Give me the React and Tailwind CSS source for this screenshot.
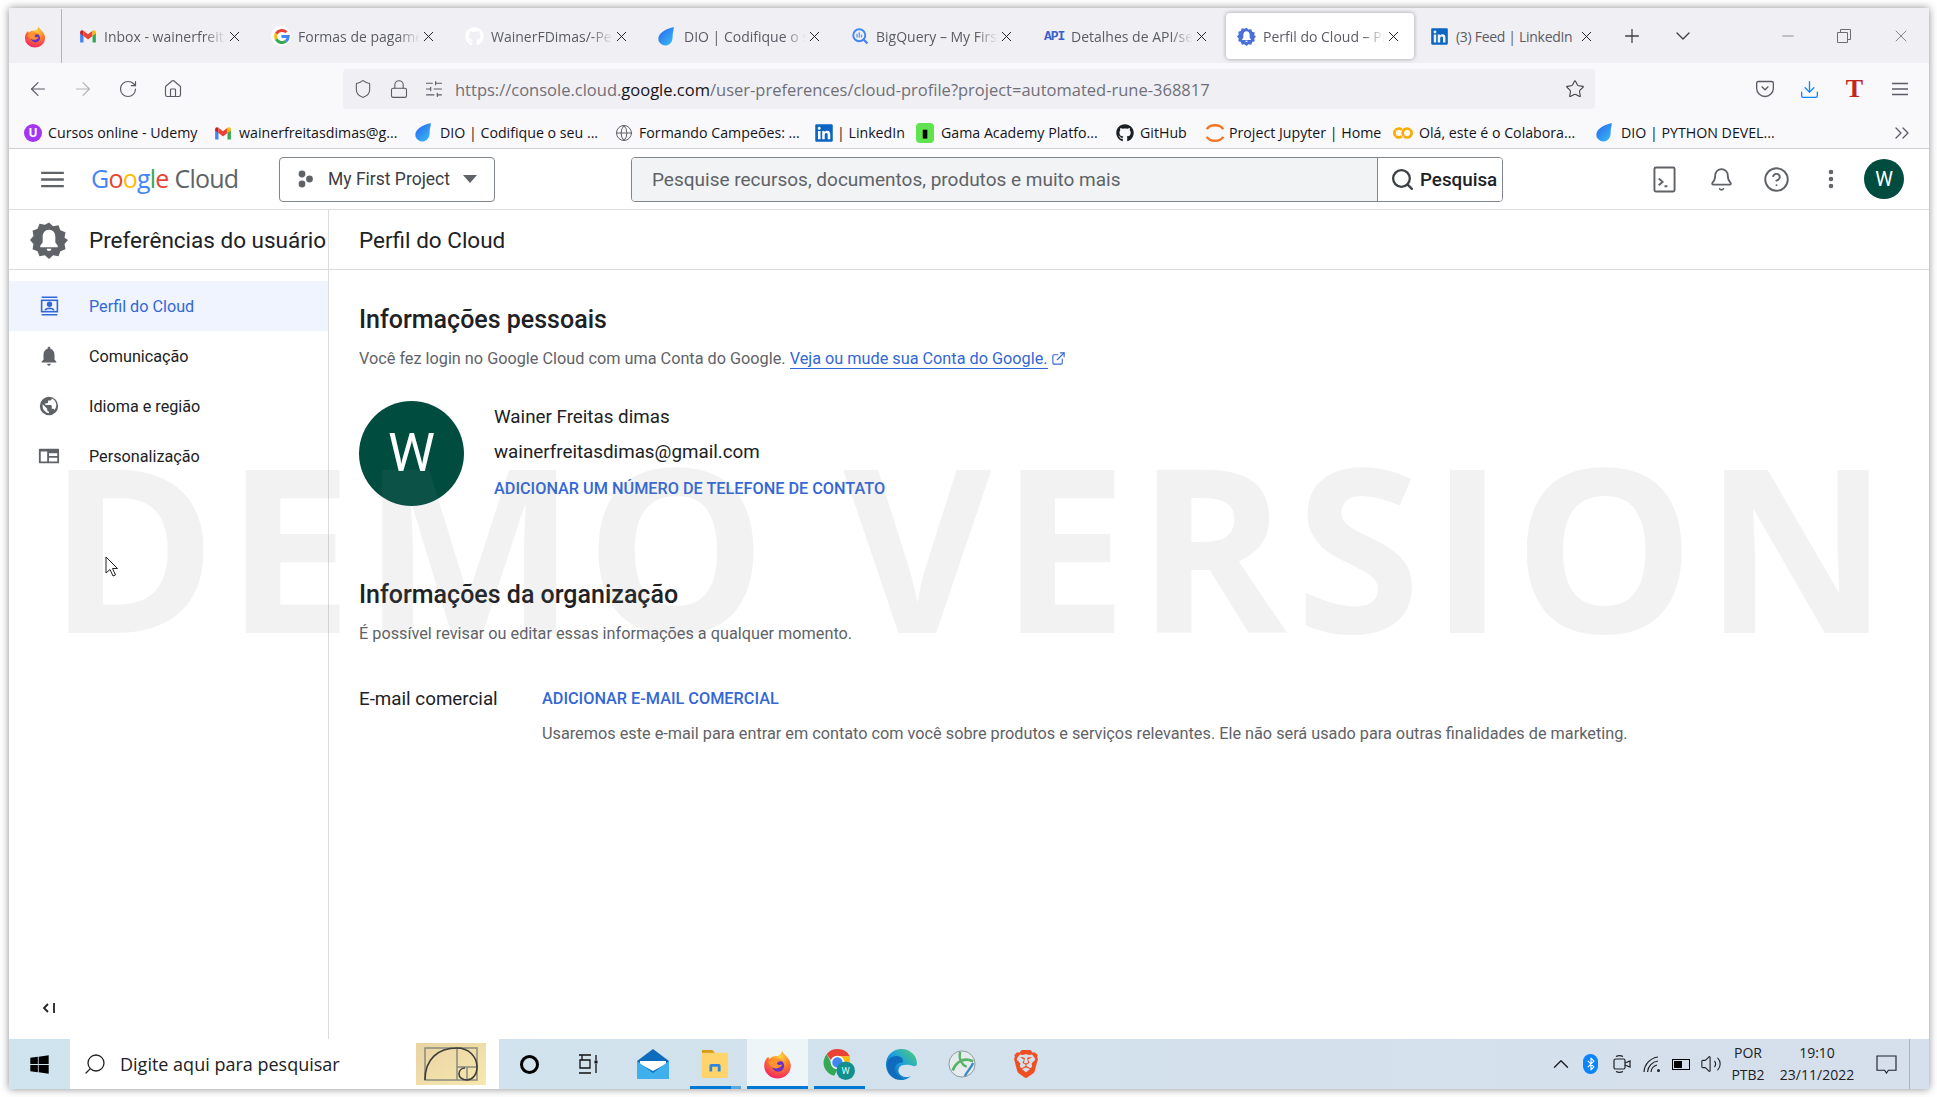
import { ArrowLeft, ArrowRight, RotateCw, Home, Shield, Lock, SlidersHorizontal, Star, Download, Plus, ChevronDown, ChevronsRight, Minus, X, Search, Bell, CircleHelp, EllipsisVertical, ExternalLink, ChevronUp, Volume2, Bluetooth, Globe } from 'lucide-react'
import { FaGithub, FaLinkedin, FaWindows } from 'react-icons/fa'
import { SiBrave, SiGooglecolab } from 'react-icons/si'

const Firefox = ({ className }) => (
  <svg viewBox="0 0 24 24" className={className}>
    <defs>
      <radialGradient id="ffx" cx="0.6" cy="0.2" r="0.95">
        <stop offset="0" stopColor="#ffd43a" />
        <stop offset="0.45" stopColor="#ff7a2a" />
        <stop offset="0.8" stopColor="#f5315c" />
        <stop offset="1" stopColor="#d6187e" />
      </radialGradient>
    </defs>
    <path d="M16 1c.5 2.500 3 3.500 4.500 6 1.500 2 2.500 4 2.500 6.500A11 10.500 0 0 1 1 13.500C1 10 2.500 7.500 4.500 6c0 1 .5 1.500 1 2C7 5.500 10 5 12 5.500c2-1 3.500-2.500 4-4.500z" fill="url(#ffx)" />
    <circle cx="12.500" cy="13.500" r="5" fill="#6a30c8" />
    <path d="M4.500 11c2-3.500 7-4.500 10-2.500 1.200.8 1.500 1.500 1.500 1.500-2.500-1-4 .5-4.500 1.500.5 1.500 3 1.500 4.500 1-1 3-6 4.500-9 1.500-1.500-1-2.500-2-2.500-3z" fill="#ff9330" />
  </svg>
)

const Gmail = ({ className }) => (
  <svg viewBox="0 0 24 24" className={className}>
    <path d="M1.500 7v13.500H6V11z" fill="#4285f4" />
    <path d="M22.500 7v13.500H18V11z" fill="#34a853" />
    <path d="M1.500 7.500C1.500 4.500 4 3.500 6 5v7L1.500 8.500z" fill="#c5221f" />
    <path d="M6 5l6 4.500L18 5v7l-6 4.500L6 12z" fill="#ea4335" />
    <path d="M18 5c2-1.500 4.500-.5 4.500 2.500v1L18 12z" fill="#fbbc04" />
  </svg>
)

const GoogleG = ({ className }) => (
  <span className={`${className} rounded-full bg-white flex items-center justify-center`}>
    <svg viewBox="0 0 24 24" className="w-[17px] h-[17px]" fill="none" strokeWidth="4.200">
      <path d="M19 6a9.500 9.500 0 0 0-14.500 2" stroke="#ea4335" />
      <path d="M4.500 8a9.500 9.500 0 0 0 0 8" stroke="#fbbc04" />
      <path d="M4.500 16a9.500 9.500 0 0 0 14 2.500" stroke="#34a853" />
      <path d="M18.500 18.500a9.500 9.500 0 0 0 3-6.500H12" stroke="#4285f4" />
    </svg>
  </span>
)

const Dio = ({ className }) => (
  <svg viewBox="0 0 24 24" className={className}>
    <defs>
      <linearGradient id="dio" x1="0.2" y1="0.1" x2="0.9" y2="0.9">
        <stop offset="0" stopColor="#2a6ff0" />
        <stop offset="1" stopColor="#38b6f2" />
      </linearGradient>
    </defs>
    <path d="M20 1c1 3-1 5-1 11a8.500 10 0 0 1-16 5C1 9 9 4 20 1z" fill="url(#dio)" />
  </svg>
)

const BigQuery = ({ className }) => (
  <svg viewBox="0 0 24 24" className={className} fill="none">
    <circle cx="11" cy="11" r="8" stroke="#4285f4" strokeWidth="2.500" />
    <path d="M8 9v5M11 7v7M14 10v4" stroke="#669df6" strokeWidth="1.800" />
    <path d="M16 16l6 6" stroke="#4285f4" strokeWidth="3" />
  </svg>
)

const GearBell = ({ className, fill = '#5f6368', bell = '#fff' }) => (
  <svg viewBox="0 0 24 24" className={className}>
    <path fill={fill} d="M12 1l2.600 2.300 3.400-.6 1.200 3.200 3.200 1.200-.6 3.400L24 12l-2.200 2.500.6 3.400-3.200 1.200-1.200 3.200-3.400-.6L12 24l-2.600-2.300-3.400.6-1.200-3.200-3.200-1.200.6-3.400L0 12l2.200-2.500-.6-3.400 3.200-1.200L6 1.700l3.400.6z" />
    <path fill={bell} d="M12 5.500c-2.500 0-4 2-4 4.500v3.500L6.500 15.500v1h11v-1L16 13.500V10c0-2.500-1.500-4.500-4-4.500zM10.500 17.500h3a1.500 1.500 0 0 1-3 0z" />
  </svg>
)

const ApiIcon = () => (
  <span className="w-[20px] shrink-0 text-[13px] font-bold text-[#3b62c9] leading-none font-['Liberation_Mono',monospace] tracking-[-1px]">API</span>
)

const tabs = [
  { title: 'Inbox - wainerfreitasdimas', icon: <Gmail className="w-[18px] h-[18px] shrink-0" /> },
  { title: 'Formas de pagamento', icon: <GoogleG className="w-[20px] h-[20px] shrink-0 -ml-[1px]" /> },
  { title: 'WainerFDimas/-Personal', icon: <FaGithub className="w-[19px] h-[19px] shrink-0 text-white" /> },
  { title: 'DIO | Codifique o seu', icon: <Dio className="w-[21px] h-[21px] shrink-0 -ml-[2px]" /> },
  { title: 'BigQuery – My First Project', icon: <BigQuery className="w-[18px] h-[18px] shrink-0" /> },
  { title: 'Detalhes de API/serviço', icon: <ApiIcon /> },
  { title: 'Perfil do Cloud – Preferências', icon: <GearBell fill="#4a6fd8" bell="#fff" className="w-[19px] h-[19px] shrink-0" />, active: true },
  { title: '(3) Feed | LinkedIn', icon: <FaLinkedin className="w-[19px] h-[19px] shrink-0 text-[#0a66c2]" />, last: true },
]

const bookmarks = [
  { label: 'Cursos online - Udemy', w: 'w-[190px]', icon: <span className="w-[18px] h-[18px] shrink-0 rounded-full bg-[#a435f0] text-white text-[12px] font-bold flex items-center justify-center leading-none">U</span> },
  { label: 'wainerfreitasdimas@g...', w: 'w-[199px]', gap: 'gap-[7px]', icon: <Gmail className="w-[18px] h-[18px] shrink-0" /> },
  { label: 'DIO | Codifique o seu ...', w: 'w-[202px]', icon: <Dio className="w-[21px] h-[21px] shrink-0" /> },
  { label: 'Formando Campeões: ...', w: 'w-[199px]', icon: <Globe className="w-[18px] h-[18px] shrink-0 text-[#5b5b66]" strokeWidth={1.300} /> },
  { label: '| LinkedIn', w: 'w-[102px]', gap: 'gap-[3px]', icon: <FaLinkedin className="w-[20px] h-[20px] shrink-0 text-[#0a66c2]" /> },
  { label: 'Gama Academy Platfo...', w: 'w-[200px]', gap: 'gap-[7px]', icon: <span className="w-[18px] h-[20px] shrink-0 rounded-[4px] bg-[#5fe34f] text-black text-[11px] font-bold flex items-center justify-center leading-none">▮</span> },
  { label: 'GitHub', w: 'w-[88px]', icon: <FaGithub className="w-[18px] h-[18px] shrink-0 text-[#1b1f23]" /> },
  { label: 'Project Jupyter | Home', w: 'w-[189px]', gap: 'gap-[3px]', icon: (
    <svg viewBox="0 0 24 24" className="w-[22px] h-[24px] shrink-0" fill="none" stroke="#f37726" strokeWidth="2.600">
      <path d="M3 8c3-6 15-6 18 0" />
      <path d="M3 16c3 6 15 6 18 0" />
    </svg>
  ) },
  { label: 'Olá, este é o Colabora...', w: 'w-[201px]', icon: <SiGooglecolab className="w-[20px] h-[20px] shrink-0 text-[#f9ab00]" /> },
  { label: 'DIO | PYTHON DEVEL...', w: 'w-[200px]', icon: <Dio className="w-[21px] h-[21px] shrink-0" /> },
]

const navItems = [
  { label: 'Perfil do Cloud', active: true, icon: (
    <svg viewBox="0 0 24 24" className="w-[21px] h-[24px]" fill="none" stroke="#3367d6" strokeWidth="1.800">
      <path d="M3 2h18M3 22h18" />
      <rect x="3" y="5.500" width="18" height="13" />
      <circle cx="12" cy="10" r="2.200" fill="#3367d6" />
      <path d="M7 17c1-3 9-3 10 0" />
    </svg>
  ) },
  { label: 'Comunicação', icon: (
    <svg viewBox="0 0 24 24" className="w-[22px] h-[22px]" fill="#5f6368">
      <path d="M12 2c-.8 0-1.500.7-1.500 1.500v.7C7.600 5 6 7.500 6 10.500V16l-2 2v1h16v-1l-2-2v-5.500c0-3-1.600-5.500-4.500-6.300v-.7C13.500 2.700 12.800 2 12 2zM10 20.500a2 2 0 0 0 4 0z" />
    </svg>
  ) },
  { label: 'Idioma e região', icon: (
    <svg viewBox="0 0 24 24" className="w-[22px] h-[22px]" fill="#5f6368">
      <path fillRule="evenodd" d="M12 2a10 10 0 1 0 0 20 10 10 0 0 0 0-20zM5 12c0-.6.1-1.200.2-1.800L10 15v1c0 1.100.9 2 2 2v1.900A8 8 0 0 1 5 12zm12.900 4.400c-.3-.8-1-1.400-1.900-1.400h-1v-3c0-.6-.4-1-1-1H8v-2h2c.6 0 1-.4 1-1V6h2c1.100 0 2-.9 2-2v-.2c2.900 1.200 5 4 5 7.200 0 2-.8 3.900-2.100 5.400z" />
    </svg>
  ) },
  { label: 'Personalização', icon: (
    <svg viewBox="0 0 24 24" className="w-[22px] h-[22px]" fill="#5f6368">
      <path fillRule="evenodd" d="M2 4h20a1 1 0 0 1 1 1v14a1 1 0 0 1-1 1H2a1 1 0 0 1-1-1V5a1 1 0 0 1 1-1zM3 7v11h7V7zM12 9v3h9V9zM12 14v4h9v-4z" />
    </svg>
  ) },
]

function ToolBtn({ children }) {
  return <div className="w-[45px] h-[40px] shrink-0 flex items-center justify-center">{children}</div>
}

function TaskCell({ w, bar, children }) {
  return (
    <div className={`${w} relative h-full shrink-0 flex items-center justify-center`}>
      {children}
      {bar}
    </div>
  )
}

export default function App() {
  return (
    <div className="relative w-[1937px] h-[1097px] bg-white pl-[9px] pt-[8px] overflow-hidden font-['Roboto',sans-serif]">
      <div className="w-[1920px] h-[1081px] flex flex-col bg-white shadow-[0_0_8px_rgba(0,0,0,0.45)]">

        {/* Tab strip */}
        <div className="h-[55px] shrink-0 bg-[#f0f0f4] flex items-center pt-[1px] font-['Open_Sans',sans-serif] text-[14px] text-[#5b5b66]">
          <div className="w-[53px] h-full shrink-0 border-r border-[#b5b5b8] flex items-center justify-center">
            <Firefox className="w-[22px] h-[23px]" />
          </div>
          <div className="flex gap-[5px] ml-[6px]">
            {tabs.map(t => (
              <div key={t.title} className={`w-[188px] h-[46px] shrink-0 flex items-center pl-[11px] rounded-[4px] ${t.active ? 'bg-white shadow-[0_0_4px_rgba(0,0,0,0.35)]' : ''}`}>
                {t.icon}
                <span className={`ml-[7px] w-[122px] shrink-0 overflow-hidden whitespace-nowrap ${t.last ? 'tracking-[-0.3px]' : '[mask-image:linear-gradient(to_right,black_82%,transparent)]'}`}>{t.title}</span>
                <X className="w-[17px] h-[17px] shrink-0 text-[#15141a]" strokeWidth={1.300} />
              </div>
            ))}
          </div>
          <Plus className="w-[22px] h-[22px] ml-[14px] shrink-0 text-[#3f3f46]" strokeWidth={1.400} />
          <ChevronDown className="w-[24px] h-[24px] ml-[28px] shrink-0 text-[#3f3f46]" strokeWidth={1.400} />
          <Minus className="w-[18px] h-[18px] ml-[84px] shrink-0 text-[#6d6d75]" strokeWidth={1} />
          <svg viewBox="0 0 14 14" className="w-[14px] h-[14px] ml-[40px] shrink-0" fill="none" stroke="#6d6d75">
            <path d="M3.500 3.500V.5h10v10h-3M.5 3.500h10v10H.5z" />
          </svg>
          <X className="w-[20px] h-[20px] ml-[40px] shrink-0 text-[#6d6d75]" strokeWidth={1} />
        </div>

        {/* Toolbar */}
        <div className="h-[47px] shrink-0 bg-[#f9f9fb] flex items-center pt-[5px] pl-[6px] text-[#5b5b66]">
          <ToolBtn><ArrowLeft className="w-[22px] h-[22px]" strokeWidth={1.300} /></ToolBtn>
          <ToolBtn><ArrowRight className="w-[22px] h-[22px] text-[#b4b4b8]" strokeWidth={1.300} /></ToolBtn>
          <ToolBtn><RotateCw className="w-[20px] h-[20px]" strokeWidth={1.400} /></ToolBtn>
          <ToolBtn><Home className="w-[20px] h-[20px]" strokeWidth={1.400} /></ToolBtn>
          <div className="ml-[148px] w-[1252px] h-[40px] shrink-0 rounded-[4px] bg-[#f0f0f4] flex items-center pl-[10px] pr-[10px] font-['Open_Sans',sans-serif] text-[16.500px]">
            <Shield className="w-[20px] h-[20px] shrink-0" strokeWidth={1.300} />
            <Lock className="w-[20px] h-[20px] ml-[16px] shrink-0" strokeWidth={1.300} />
            <SlidersHorizontal className="w-[20px] h-[20px] ml-[15px] shrink-0" strokeWidth={1.300} />
            <span className="ml-[11px] pt-[2px] text-[#6f6f78] whitespace-nowrap">https://console.cloud.<span className="text-[#15141a]">google.com</span>/user-preferences/cloud-profile?project=automated-rune-368817</span>
            <Star className="w-[20px] h-[20px] ml-auto shrink-0 text-[#3f3f46]" strokeWidth={1.300} />
          </div>
          <div className="ml-[147px] flex">
            <ToolBtn>
              <svg viewBox="0 0 24 24" className="w-[20px] h-[20px]" fill="none" stroke="#5b5b66" strokeWidth="1.600">
                <path d="M4 3h16a2 2 0 0 1 2 2v6a10 10 0 0 1-20 0V5a2 2 0 0 1 2-2z" />
                <path d="M8 9l4 4 4-4" />
              </svg>
            </ToolBtn>
            <ToolBtn><Download className="w-[21px] h-[21px] text-[#0a84ff]" strokeWidth={1.500} /></ToolBtn>
            <ToolBtn><span className="font-['Liberation_Serif',serif] font-bold text-[26px] leading-none text-[#c0281c]">T</span></ToolBtn>
            <ToolBtn>
              <svg viewBox="0 0 18 14" className="w-[18px] h-[14px]" fill="none" stroke="#5b5b66" strokeWidth="1.500">
                <path d="M1 1.500h16M1 7h16M1 12.500h16" />
              </svg>
            </ToolBtn>
          </div>
        </div>

        {/* Bookmarks */}
        <div className="h-[39px] shrink-0 bg-[#f9f9fb] border-b border-[#cfcfd4] flex items-center pt-[8px] pl-[15px] font-['Open_Sans',sans-serif] text-[14.200px] text-[#15141a]">
          {bookmarks.map(b => (
            <div key={b.label} className={`${b.w} shrink-0 flex items-center ${b.gap || 'gap-[6px]'} whitespace-nowrap`}>
              {b.icon}
              <span>{b.label}</span>
            </div>
          ))}
          <ChevronsRight className="w-[24px] h-[24px] ml-[96px] shrink-0 text-[#5b5b66]" strokeWidth={1.300} />
        </div>

        {/* Console header */}
        <div className="h-[61px] shrink-0 flex items-center border-b border-[#dadce0] pl-[32px]">
          <svg viewBox="0 0 24 18" className="w-[23px] h-[17px] shrink-0" fill="none" stroke="#5f6368" strokeWidth="2.400">
            <path d="M0 2h24M0 9h24M0 16h24" />
          </svg>
          <div className="ml-[27px] w-[188px] shrink-0 flex items-baseline -mt-[2px] text-[25px] leading-none font-['Open_Sans',sans-serif] tracking-[-0.8px]">
            <span className="text-[#4285f4]">G</span>
            <span className="text-[#ea4335]">o</span>
            <span className="text-[#fbbc04]">o</span>
            <span className="text-[#4285f4]">g</span>
            <span className="text-[#34a853]">l</span>
            <span className="text-[#ea4335]">e</span>
            <span className="ml-[6px] text-[#5f6368]">Cloud</span>
          </div>
          <div className="w-[216px] h-[45px] shrink-0 rounded-[4px] border border-[#80868b] flex items-center pl-[16px]">
            <svg viewBox="0 0 18 18" className="w-[18px] h-[18px] shrink-0" fill="#5f6368">
              <circle cx="6" cy="4" r="3.400" />
              <circle cx="6" cy="14" r="3.400" />
              <circle cx="13.500" cy="9" r="3.400" />
            </svg>
            <span className="ml-[14px] pt-[1px] text-[17.500px] text-[#3c4043] whitespace-nowrap">My First Project</span>
            <span className="ml-[13px] w-0 h-0 border-x-[7px] border-x-transparent border-t-[8px] border-t-[#5f6368]" />
          </div>
          <div className="ml-[136px] w-[872px] h-[45px] shrink-0 rounded-[4px] border border-[#80868b] flex items-stretch overflow-hidden">
            <div className="flex-1 bg-[#f1f3f4] border-r border-[#80868b] flex items-center pl-[20px] pt-[2px] text-[19px] text-[#5f6368] whitespace-nowrap">Pesquise recursos, documentos, produtos e muito mais</div>
            <div className="w-[124px] shrink-0 flex items-center pl-[12px] bg-white">
              <Search className="w-[25px] h-[25px] shrink-0 text-[#3c4043]" strokeWidth={2.200} />
              <span className="ml-[5px] pt-[2px] text-[18.800px] font-medium text-[#202124]">Pesquisa</span>
            </div>
          </div>
          <div className="ml-[150px] flex items-center">
            <svg viewBox="0 0 24 28" className="w-[23px] h-[27px] shrink-0" fill="none" stroke="#5f6368" strokeWidth="2">
              <rect x="1.500" y="1.500" width="21" height="25" rx="1.500" />
              <path d="M6 13l4 3.500-4 3.500M12 21h3" />
            </svg>
            <Bell className="ml-[33px] w-[25px] h-[25px] shrink-0 text-[#5f6368]" strokeWidth={1.700} />
            <CircleHelp className="ml-[29px] w-[27px] h-[27px] shrink-0 text-[#5f6368]" strokeWidth={1.700} />
            <EllipsisVertical className="ml-[29px] w-[24px] h-[24px] shrink-0 text-[#5f6368]" strokeWidth={2.600} />
            <div className="ml-[21px] w-[40px] h-[40px] shrink-0 rounded-full bg-[#004d40] text-white flex items-center justify-center text-[20px]">W</div>
          </div>
        </div>

        {/* Console body */}
        <div className="flex-1 min-h-0 flex">
          <aside className="w-[320px] shrink-0 border-r border-[#dadce0] flex flex-col">
            <div className="h-[60px] shrink-0 border-b border-[#dadce0] flex items-center pl-[21px]">
              <GearBell className="w-[38px] h-[38px] shrink-0" />
              <span className="ml-[21px] pt-[3px] text-[22.500px] text-[#202124] whitespace-nowrap">Preferências do usuário</span>
            </div>
            <nav className="pt-[11px]">
              {navItems.map(n => (
                <div key={n.label} className={`h-[50px] flex items-center text-[16.200px] ${n.active ? 'bg-[#eff4fe] text-[#3367d6]' : 'text-[#202124]'}`}>
                  <div className="w-[80px] shrink-0 flex items-center justify-center">{n.icon}</div>
                  <span className="pt-[2px]">{n.label}</span>
                </div>
              ))}
            </nav>
            <div className="mt-auto pb-[24px] pl-[33px] text-[#202124] flex items-center">
              <svg viewBox="0 0 14 14" className="w-[14px] h-[14px]" fill="none" stroke="#202124" strokeWidth="1.800">
                <path d="M6 3L2 7l4 4M12 2v10" />
              </svg>
            </div>
          </aside>

          <main className="flex-1 min-w-0 flex flex-col">
            <div className="h-[60px] shrink-0 border-b border-[#dadce0] flex items-center pl-[30px] pt-[3px] text-[22.500px] text-[#202124]">Perfil do Cloud</div>
            <div className="pl-[30px]">
              <h2 className="mt-[34px] h-[32px] leading-[32px] text-[25px] font-medium text-[#202124] whitespace-nowrap">Informações pessoais</h2>
              <p className="mt-[11px] h-[24px] leading-[24px] text-[16.250px] text-[#5f6368] whitespace-nowrap">
                Você fez login no Google Cloud com uma Conta do Google. <span className="text-[#3367d6] border-b border-[#3367d6]">Veja ou mude sua Conta do Google.</span>
                <ExternalLink className="inline-block w-[15px] h-[15px] ml-[3px] -mt-[2px] text-[#3367d6]" strokeWidth={1.800} />
              </p>
              <div className="mt-[30px] flex">
                <div className="w-[105px] h-[105px] shrink-0 rounded-full bg-[#004d40] text-white flex items-center justify-center text-[53px]">W</div>
                <div className="ml-[30px] pt-[4px]">
                  <p className="h-[24px] leading-[24px] text-[18.800px] text-[#202124] whitespace-nowrap">Wainer Freitas dimas</p>
                  <p className="mt-[11px] h-[24px] leading-[24px] text-[18.800px] text-[#202124] whitespace-nowrap">wainerfreitasdimas@gmail.com</p>
                  <p className="mt-[13px] h-[24px] leading-[24px] text-[16.250px] font-medium text-[#3367d6] whitespace-nowrap">ADICIONAR UM NÚMERO DE TELEFONE DE CONTATO</p>
                </div>
              </div>
              <h2 className="mt-[73px] h-[32px] leading-[32px] text-[25px] font-medium text-[#202124] whitespace-nowrap">Informações da organização</h2>
              <p className="mt-[11px] h-[24px] leading-[24px] text-[16.250px] text-[#5f6368] whitespace-nowrap">É possível revisar ou editar essas informações a qualquer momento.</p>
              <div className="mt-[41px] flex">
                <div className="w-[183px] shrink-0 h-[24px] leading-[24px] text-[18.800px] text-[#202124] whitespace-nowrap">E-mail comercial</div>
                <div>
                  <p className="h-[24px] leading-[24px] text-[16.250px] font-medium text-[#3367d6] whitespace-nowrap">ADICIONAR E-MAIL COMERCIAL</p>
                  <p className="mt-[11px] h-[24px] leading-[24px] text-[16.250px] text-[#5f6368] whitespace-nowrap">Usaremos este e-mail para entrar em contato com você sobre produtos e serviços relevantes. Ele não será usado para outras finalidades de marketing.</p>
                </div>
              </div>
            </div>
          </main>
        </div>

        {/* Windows taskbar */}
        <div className="h-[50px] shrink-0 flex items-stretch bg-gradient-to-r from-[#cfe4ee] to-[#d6dfec] font-['Open_Sans',sans-serif]">
          <TaskCell w="w-[61px]"><FaWindows className="w-[21px] h-[21px] text-black" /></TaskCell>
          <div className="w-[429px] shrink-0 bg-white flex items-center pl-[13px]">
            <Search className="w-[24px] h-[24px] shrink-0 text-[#202124] -scale-x-100" strokeWidth={1.300} />
            <span className="ml-[13px] text-[18px] text-[#202124] whitespace-nowrap">Digite aqui para pesquisar</span>
            <div className="ml-[76px] w-[70px] h-[42px] shrink-0 bg-gradient-to-br from-[#e8d3a4] to-[#f8e8ae] flex items-center justify-center">
              <svg viewBox="0 0 54 34" className="w-[54px] h-[34px]" fill="none">
                <g stroke="#8a8a80" strokeWidth="1.500">
                  <rect x="1" y="1" width="52" height="32" />
                  <path d="M33 1v32M33 20h20M43 20v13" />
                </g>
                <path d="M1 33C1 12 14 1 33 1c12 0 20 9 20 19 0 8-5 13-10 13-5 0-8-3-8-6 0-4 3-6 6-6" stroke="#3f3d38" strokeWidth="1.600" />
              </svg>
            </div>
          </div>
          <TaskCell w="w-[60px]"><span className="w-[19px] h-[19px] rounded-full border-[3px] border-black" /></TaskCell>
          <TaskCell w="w-[58px]">
            <svg viewBox="0 0 20 20" className="w-[20px] h-[20px]" fill="none" stroke="#111" strokeWidth="1.300">
              <path d="M1 1h12M1 19h12M2 6h10v8H2zM4 1v5M10 1v0M18 1v5M18 10v9" />
              <rect x="16.500" y="6.500" width="3" height="3" fill="#111" stroke="none" />
            </svg>
          </TaskCell>
          <TaskCell w="w-[72px]">
            <svg viewBox="0 0 32 30" className="w-[32px] h-[30px]">
              <path d="M0 12L16 0l16 12v18H0z" fill="#0f6cbd" />
              <path d="M3 12h26v3L16 22 3 15z" fill="#fff" />
              <path d="M0 12l16 12 16-12v18H0z" fill="#3fb0ec" />
            </svg>
          </TaskCell>
          <TaskCell w="w-[58px]" bar={<span className="absolute bottom-0 left-[1px] w-[51px] h-[3px] bg-gradient-to-r from-[#0078d4] from-[80%] to-[#5ca8e0] to-[80%]" />}>
            <svg viewBox="0 0 30 32" className="w-[28px] h-[30px] -ml-[6px]">
              <path d="M1 1h11l3 3h14v27H1z" fill="#ffd56b" />
              <path d="M1 1h11l3 3H1z" fill="#d69a1a" />
              <path d="M9 24v-6a2 2 0 0 1 2-2h8a2 2 0 0 1 2 2v6h-3v-5h-6v5z" fill="#2e86d9" />
            </svg>
          </TaskCell>
          <TaskCell w="w-[61px]" bar={<span className="absolute bottom-0 left-0 w-full h-[3px] bg-[#0078d4]" />}>
            <div className="w-full h-full flex items-center justify-center bg-[#edf5f9]"><Firefox className="w-[29px] h-[30px]" /></div>
          </TaskCell>
          <TaskCell w="w-[62px]" bar={<span className="absolute bottom-0 left-[6px] w-[51px] h-[3px] bg-[#0078d4]" />}>
            <svg viewBox="0 0 32 32" className="w-[33px] h-[33px]">
              <path d="M14 1a13 13 0 0 1 12 7H14a6 6 0 0 0-6 4L3.500 6A13 13 0 0 1 14 1z" fill="#ea4335" />
              <path d="M3.500 6L9 16a6 6 0 0 0 5 4l-3 7A13 13 0 0 1 3.500 6z" fill="#34a853" />
              <path d="M26 8a13 13 0 0 1-1 8l-6-5a6 6 0 0 0-3-3z" fill="#fbbc04" />
              <circle cx="14" cy="14" r="5" fill="#4285f4" />
              <circle cx="14" cy="14" r="6" fill="none" stroke="#fff" strokeWidth="1.200" />
              <circle cx="22" cy="22" r="9" fill="#12908e" />
              <text x="22" y="25" fontSize="9" fill="#dff" textAnchor="middle" fontFamily="Roboto">W</text>
            </svg>
          </TaskCell>
          <TaskCell w="w-[62px]">
            <svg viewBox="0 0 30 30" className="w-[31px] h-[31px]">
              <defs>
                <linearGradient id="edge" x1="0" y1="1" x2="1" y2="0">
                  <stop offset="0" stopColor="#0c59a4" />
                  <stop offset="0.5" stopColor="#1b9de2" />
                  <stop offset="1" stopColor="#54d26c" />
                </linearGradient>
              </defs>
              <path d="M15 0C7 0 0 6 0 15c0 9 7 15 14 15 4 0 7-1 9-3 1-1 0-1-1 0-5 1-10-2-10-6 0-2 1-4 3-5 3-1 8-1 10 0 2 1 5 1 5-2C30 6 23 0 15 0z" fill="url(#edge)" />
              <path d="M1 14c1-5 6-8 11-7 4 1 5 4 4 6-5 0-8 3-7 8 1 3 3 6 7 8-8 1-15-6-15-15z" fill="#0f6cbd" />
            </svg>
          </TaskCell>
          <TaskCell w="w-[60px]">
            <svg viewBox="0 0 30 30" className="w-[28px] h-[28px]" fill="none">
              <circle cx="15" cy="15" r="14" fill="#e6ebee" stroke="#8b969c" />
              <path d="M5 22C9 12 17 8 27 12" stroke="#58b368" strokeWidth="3" />
              <path d="M13 2c-2 8 2 14 7 16" stroke="#58b368" strokeWidth="2.500" />
              <path d="M27 14c-3 6-7 10-9 14" stroke="#3b89c9" strokeWidth="2.500" />
            </svg>
          </TaskCell>
          <TaskCell w="w-[68px]"><SiBrave className="w-[28px] h-[32px] text-[#f04e23]" /></TaskCell>
          <div className="flex-1 min-w-0 flex items-center text-[#202124]">
            <ChevronUp className="ml-[488px] w-[26px] h-[26px] shrink-0" strokeWidth={1.300} />
            <div className="ml-[9px] w-[15px] h-[20px] shrink-0 rounded-full bg-[#0a84ff] flex items-center justify-center"><Bluetooth className="w-[14px] h-[14px] text-white" strokeWidth={2} /></div>
            <svg viewBox="0 0 20 20" className="ml-[14px] w-[20px] h-[20px] shrink-0" fill="none" stroke="#202124" strokeWidth="1.200">
              <rect x="2" y="5" width="11" height="10" rx="1.500" />
              <path d="M13 9l5-2v6l-5-2M4 2.500c2-1 5-1 7 0M4 17.500c2 1 5 1 7 0" />
            </svg>
            <svg viewBox="0 0 20 20" className="ml-[10px] w-[20px] h-[20px] shrink-0" fill="none" stroke="#202124" strokeWidth="1.200">
              <path d="M2 18A16 16 0 0 1 16 3M5.500 18A12 12 0 0 1 16 7M9 18A8 8 0 0 1 15 11" />
              <circle cx="16.500" cy="16.500" r="1.500" fill="#202124" stroke="none" />
            </svg>
            <div className="ml-[10px] w-[18px] h-[11px] shrink-0 border border-black p-[1px]"><div className="w-[8px] h-full bg-black" /></div>
            <Volume2 className="ml-[10px] w-[22px] h-[22px] shrink-0" strokeWidth={1.200} />
            <div className="ml-[6px] w-[40px] shrink-0 text-center text-[14px] leading-[22px] whitespace-nowrap"><div>POR</div><div>PTB2</div></div>
            <div className="ml-[8px] w-[82px] shrink-0 text-center text-[14px] leading-[22px] whitespace-nowrap"><div>19:10</div><div>23/11/2022</div></div>
            <svg viewBox="0 0 22 20" className="ml-[18px] w-[21px] h-[19px] shrink-0" fill="none" stroke="#202124" strokeWidth="1.200">
              <path d="M1 1h20v15h-8l-2 3-2-3H1z" />
            </svg>
            <div className="ml-[12px] w-px h-full bg-[#a9b1bb]" />
          </div>
        </div>
      </div>

      {/* Trial-software watermark over the whole capture */}
      <div className="absolute left-[48px] top-[410px] pointer-events-none whitespace-nowrap font-['Open_Sans',sans-serif] font-bold text-[228px] tracking-[8.600px] leading-[270px] text-[rgba(128,128,128,0.1)]">DEMO VERSION</div>

      {/* Mouse pointer */}
      <svg viewBox="0 0 14 22" className="absolute left-[105px] top-[556px] w-[14px] h-[22px]" fill="#fff" stroke="#222" strokeWidth="1">
        <path d="M1 1v16l4-3.500 3 6.500 2.500-1-3-6.500h5z" />
      </svg>
    </div>
  )
}
